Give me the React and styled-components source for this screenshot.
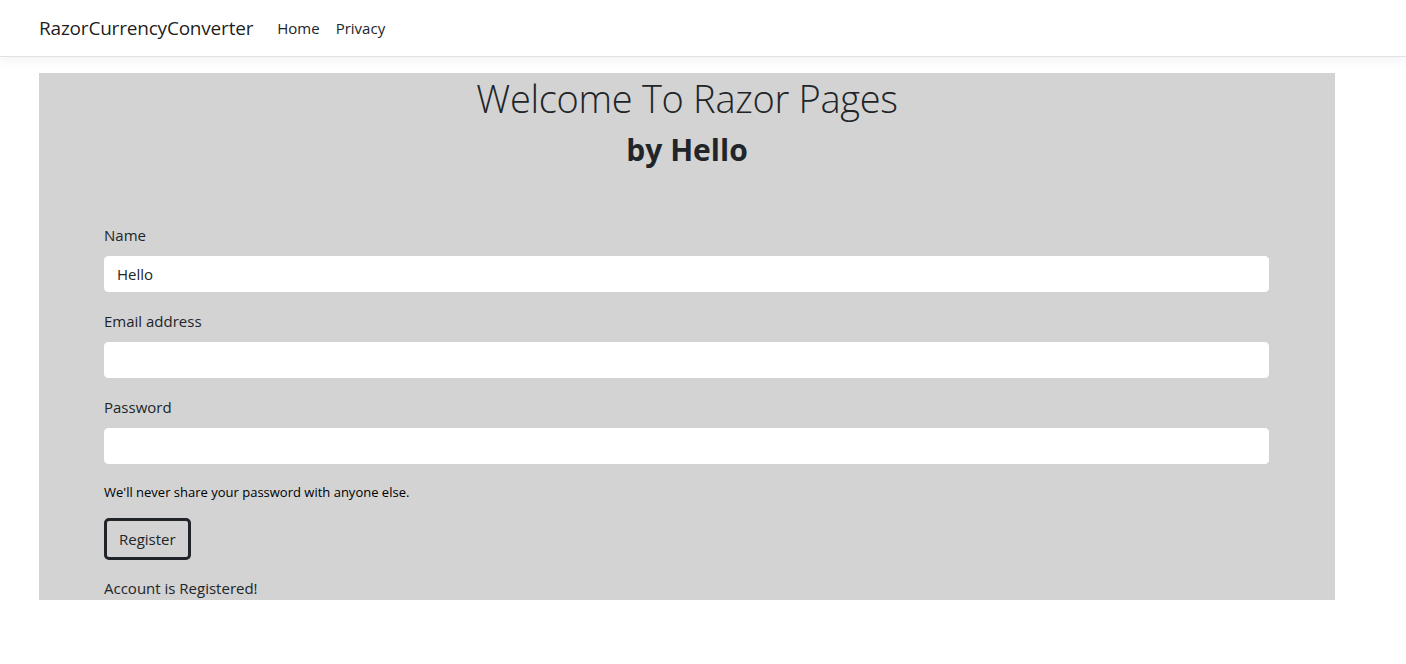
import React from 'react';
import styled, { createGlobalStyle } from 'styled-components';

const GlobalStyle = createGlobalStyle`
  * { box-sizing: border-box; }
  body {
    margin: 0;
    background: #fff;
    color: #212529;
    font-family: "Open Sans", "Noto Sans", sans-serif;
    font-size: 16px;
    line-height: 1.5;
  }
`;

const Navbar = styled.header`
  height: 57px;
  border-bottom: 1px solid #dee2e6;
  box-shadow: 0 4px 12px rgba(0, 0, 0, 0.05);
  display: flex;
  align-items: center;
  padding: 0 39px;
`;

const Brand = styled.a`
  font-size: 19px;
  color: rgba(0, 0, 0, 0.9);
  margin-right: 16px;
  text-decoration: none;
  letter-spacing: -0.2px;
`;

const NavLink = styled.a`
  font-size: 15px;
  color: #212529;
  padding: 0 8px;
  text-decoration: none;
`;

const Main = styled.main`
  padding: 16px 39px 0;
`;

const Panel = styled.section`
  width: 1296px;
  background: #d3d3d3;
`;

const Title = styled.h1`
  margin: 0 0 8px;
  text-align: center;
  font-size: 38px;
  font-weight: 300;
  line-height: 50px;
  letter-spacing: -0.3px;
`;

const Subtitle = styled.h2`
  margin: 0;
  text-align: center;
  font-size: 30px;
  font-weight: 700;
  line-height: 38px;
`;

const Form = styled.form`
  padding: 54px 65px 0 65px;
  padding-right: 66px;
`;

const Group = styled.div`
  margin-bottom: ${p => (p.$last ? 0 : 17)}px;
`;

const Label = styled.label`
  display: block;
  font-size: 15px;
  line-height: 24px;
  margin-bottom: 9px;
`;

const Input = styled.input`
  display: block;
  width: 100%;
  height: 36px;
  padding: 6px 12px;
  border: 1px solid #fff;
  border-radius: 4px;
  background: #fff;
  font: inherit;
  font-size: 15px;
  color: #212529;
  outline: none;
`;

const Hint = styled.div`
  font-size: 13px;
  line-height: 21px;
  color: #000;
  margin-top: 18px;
`;

const Button = styled.button`
  margin-top: 15px;
  height: 42px;
  padding: 0 12px;
  border: 3px solid #212529;
  border-radius: 5px;
  background: transparent;
  font: inherit;
  font-size: 15px;
  color: #212529;
`;

const Status = styled.p`
  margin: 16px 0 0;
  font-size: 15px;
  line-height: 24px;
`;

export default function App() {
  return (
    <>
      <GlobalStyle />
      <Navbar>
        <Brand href="#">RazorCurrencyConverter</Brand>
        <NavLink href="#">Home</NavLink>
        <NavLink href="#">Privacy</NavLink>
      </Navbar>
      <Main>
        <Panel>
          <Title>Welcome To Razor Pages</Title>
          <Subtitle>by Hello</Subtitle>
          <Form onSubmit={e => e.preventDefault()}>
            <Group>
              <Label>Name</Label>
              <Input defaultValue="Hello" />
            </Group>
            <Group>
              <Label>Email address</Label>
              <Input type="email" />
            </Group>
            <Group $last>
              <Label>Password</Label>
              <Input type="password" />
            </Group>
            <Hint>We'll never share your password with anyone else.</Hint>
            <Button type="submit">Register</Button>
            <Status>Account is Registered!</Status>
          </Form>
        </Panel>
      </Main>
    </>
  );
}
